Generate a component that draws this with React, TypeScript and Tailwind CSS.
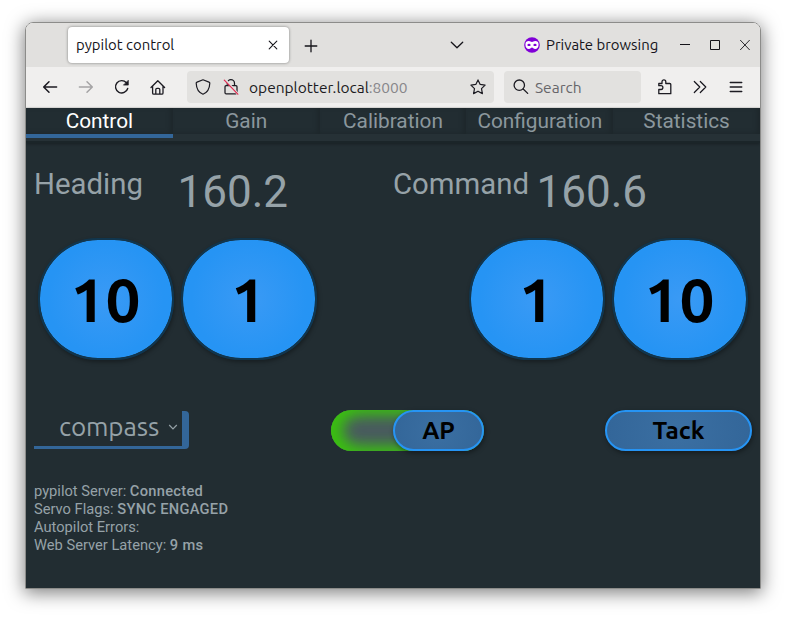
import type { ReactNode } from "react";

const ubuntu = "font-['Ubuntu','Noto_Sans',sans-serif]";

function Icon({ children, className = "" }: { children: ReactNode; className?: string }) {
  return (
    <svg
      viewBox="0 0 16 16"
      fill="none"
      stroke="currentColor"
      strokeWidth="1.3"
      strokeLinecap="round"
      strokeLinejoin="round"
      className={`block size-4 shrink-0 ${className}`}
    >
      {children}
    </svg>
  );
}

function TitleBar() {
  return (
    <div className="flex h-11 items-center bg-[#e1e0de] text-[#15141a]">
      <div className="-mt-px ml-[42px] flex h-9 w-[221px] shrink-0 items-center rounded bg-white pr-[8px] pl-[8px] shadow-[0_0_3px_rgba(0,0,0,0.45)]">
        <span className="pt-[2px] text-[14.9px] whitespace-nowrap">pypilot control</span>
        <Icon className="ml-auto">
          <path d="M4.2 4.2l7.6 7.6M11.8 4.2l-7.6 7.6" strokeWidth="1.1" />
        </Icon>
      </div>
      <Icon className="mt-px ml-[14px]">
        <path d="M8 2.2v11.6M2.2 8h11.6" />
      </Icon>
      <Icon className="ml-[130px]">
        <path d="M2.3 5.2L8 10.7l5.7-5.5" />
      </Icon>
      <svg viewBox="0 0 16 16" className="ml-[59px] block size-4 shrink-0">
        <circle cx="8" cy="8" r="7.8" fill="#8000d7" />
        <path
          d="M1.4 7.400c0-2.200 1.400-3.300 3.400-3.300 1.500 0 2.200.8 3.200.8s1.700-.8 3.200-.8c2 0 3.400 1.100 3.400 3.300 0 2.800-1.400 4.500-3.500 4.500-1.600 0-2.100-1.400-3.100-1.400s-1.500 1.400-3.100 1.400c-2.100 0-3.500-1.700-3.500-4.500z"
          fill="#fff"
        />
        <ellipse cx="5" cy="7.900" rx="1.600" ry="1.200" fill="#8000d7" />
        <ellipse cx="11" cy="7.900" rx="1.600" ry="1.200" fill="#8000d7" />
      </svg>
      <span className="ml-[6px] w-[113px] text-[14.9px] whitespace-nowrap">Private browsing</span>
      <svg viewBox="0 0 72 12" className="ml-[20px] block h-3 w-[72px] shrink-0" fill="none" stroke="currentColor">
        <path d="M1 5.5h10" />
        <path d="M31.5 1.500h9v9h-9z" />
        <path d="M61.200 1l9.500 10M70.700 1l-9.500 10" strokeWidth=".9" />
      </svg>
    </div>
  );
}

function ToolBar() {
  return (
    <div className="flex h-[41px] items-center border-b border-[#e0dfdd] bg-[#f0efee] text-[#1c1b22]">
      <Icon className="ml-4">
        <path d="M14.600 8H1.800M7 2.700L1.700 8 7 13.300" strokeWidth="1.500" />
      </Icon>
      <Icon className="ml-5 text-[#a5a4a5]">
        <path d="M1.400 8h12.800M9 2.700L14.300 8 9 13.300" strokeWidth="1.500" />
      </Icon>
      <Icon className="ml-5">
        <path d="M13.700 9.500A6.200 6.200 0 1 1 12.400 3.700" strokeWidth="1.400" />
        <path d="M14.300 1.600v4.500H9.800z" fill="currentColor" strokeWidth=".7" />
      </Icon>
      <Icon className="ml-5">
        <path d="M1 8.500L7.800 1.800 14.600 8.500M2.600 7.300v6.700c0 .7.400 1.200 1.200 1.200h8c.8 0 1.200-.5 1.200-1.200V7.300M5.800 15V10.500c0-.8.500-1.200 1.200-1.200h1.600c.7 0 1.200.4 1.200 1.200V15" />
      </Icon>
      <div className="ml-[21px] flex h-8 w-[307px] shrink-0 items-center rounded bg-[#e2e1df] px-2">
        <Icon>
          <path d="M8 .8l6 2.300c.7.200.8.6.8 1.100C14.600 9.400 12.300 13.500 8 15.200 3.700 13.500 1.400 9.400 1.200 4.200c0-.5.100-.9.800-1.100z" strokeWidth="1.200" />
        </Icon>
        <Icon className="ml-3">
          <path d="M4.300 6.500V4.300a3.600 3.600 0 0 1 7.200 0v2.200M3 6.700h10c.6 0 1 .4 1 1v6c0 .7-.5 1.200-1.200 1.200H3.200c-.7 0-1.200-.5-1.200-1.200v-6c0-.6.400-1 1-1z" strokeWidth="1.250" />
          <path d="M2.300.800l12.800 14.500" stroke="#e2e1df" strokeWidth="2.400" />
          <path d="M1.300 1.200l13.500 14" stroke="#e22850" strokeWidth="1.200" />
        </Icon>
        <span className="ml-[10px] pt-px text-[15.5px] whitespace-nowrap">
          openplotter.local<span className="text-[#87868a]">:8000</span>
        </span>
        <Icon className="ml-auto">
          <path d="M8 .9l2.200 4.500 4.900.7-3.600 3.500.9 5L8 12.200l-4.400 2.400.9-5L.9 6.100l4.900-.7z" strokeWidth="1.200" />
        </Icon>
      </div>
      <div className="ml-[10px] flex h-8 w-[137px] shrink-0 items-center rounded bg-[#e2e1df] pl-[9px]">
        <Icon>
          <circle cx="6.300" cy="6.200" r="5.200" />
          <path d="M10.200 10l4.500 4.400" />
        </Icon>
        <span className="ml-[6px] pt-px text-[15.5px] text-[#67666a]">Search</span>
      </div>
      <Icon className="ml-4">
        <path d="M1.800 14.700V10.500H4a1.900 1.900 0 0 0 0-3.800H1.800V4.500H5V2.700a1.900 1.900 0 0 1 3.800 0V4.500h4c.6 0 1 .4 1 1v9.200z" />
      </Icon>
      <Icon className="ml-[19px]">
        <path d="M2.300 2.500L7.800 8l-5.500 5.500M8.300 2.500L13.800 8l-5.500 5.500" strokeWidth="1.200" />
      </Icon>
      <Icon className="ml-5">
        <path d="M2.200 3.500h11.600M2.200 8h11.600M2.200 12.500h11.600" />
      </Icon>
    </div>
  );
}

const tabs = ["Control", "Gain", "Calibration", "Configuration", "Statistics"];

function Tabs() {
  return (
    <div className="border-b-2 border-[#1b2529] shadow-[0_1px_3px_rgba(0,0,0,0.3)]">
      <div className="grid h-[33px] grid-cols-5 bg-[#263136]">
        {tabs.map((tab, i) => (
          <div
            key={tab}
            className={`flex h-[30px] justify-center border-b-4 text-[20.8px] leading-[26px] ${
              i === 0 ? "border-[#336699] text-white" : "border-[#263136] text-[#8b979d]"
            }`}
          >
            <span className="flex h-[26px] w-full justify-center bg-[#222d32] shadow-[inset_-3px_-1px_5px_rgba(0,0,0,0.14)]">{tab}</span>
          </div>
        ))}
      </div>
    </div>
  );
}

function RoundButton({ children }: { children: ReactNode }) {
  return (
    <button
      className={`${ubuntu} flex h-[122px] w-[136px] items-center justify-center rounded-[60px] border-2 border-[#10364f] bg-[radial-gradient(circle,#3a9af5_0%,#2694f4_65%,#2494f4_100%)] bg-clip-padding pr-px text-[62px] leading-none font-bold text-black shadow-[1px_2px_4px_rgba(0,0,0,0.35)]`}
    >
      {children}
    </button>
  );
}

function Reading({ label, value }: { label: string; value: string }) {
  return (
    <div className="flex w-[359px] items-start">
      <span className="w-[143.500px] text-[29.360px] leading-[34px]">{label}</span>
      <span className="text-[44.040px] leading-[50px]">{value}</span>
    </div>
  );
}

function Status({ label, value = "" }: { label: string; value?: string }) {
  return (
    <p>
      {label}: <b className="font-medium tracking-[0.28px]">{value}</b>
    </p>
  );
}

function Pilot() {
  return (
    <main className="h-[480px] bg-[#222d32] font-['Roboto',sans-serif] text-[#96a2a8]">
      <Tabs />
      <div className="flex pt-[24px] pl-2">
        <Reading label="Heading" value="160.2" />
        <Reading label="Command" value="160.6" />
      </div>
      <div className="mt-[21px] flex gap-[7px] pl-3">
        <RoundButton>10</RoundButton>
        <RoundButton>1</RoundButton>
        <div className="ml-auto flex gap-[7px] pr-3">
          <RoundButton>1</RoundButton>
          <RoundButton>10</RoundButton>
        </div>
      </div>
      <div className="mt-[50px] flex h-[41px] items-start pr-2 pl-2">
        <div className={`${ubuntu} mt-px flex h-[38px] w-[155px] items-center rounded-r-[4px] border-r-[7px] border-b-[3px] border-[#336699] pl-[25px] text-[26px] leading-none`}>
          <span className="pb-[3px] tracking-[-0.1px]">compass</span>
          <svg viewBox="0 0 10 10" className="mr-[4px] mb-[4px] ml-auto block size-[10px]" fill="none" stroke="currentColor" strokeWidth="1.200">
            <path d="M1.200 3L5 6.800 8.800 3" />
          </svg>
        </div>
        <div className="ml-[142px] flex h-[41px] w-[153px] justify-end rounded-[21px] bg-[#4a5a60] shadow-[inset_10px_0_16px_0_#3ac010,inset_0_0_18px_2px_#3ac010]">
          <button className={`${ubuntu} flex h-[41px] w-[91px] items-center justify-center rounded-[21px] border-2 border-[#2694f4] bg-[radial-gradient(circle,#3b6fa2,#336699)] text-[24.5px] font-bold text-black shadow-[1px_2px_5px_rgba(0,0,0,0.4)]`}>
            AP
          </button>
        </div>
        <button className={`${ubuntu} ml-auto flex h-[41px] w-[147px] items-center justify-center rounded-[21px] border-2 border-[#2694f4] bg-[radial-gradient(circle,#3b6fa2,#336699)] text-[24.5px] font-bold text-black shadow-[1px_2px_5px_rgba(0,0,0,0.4)]`}>
          Tack
        </button>
      </div>
      <div className="mt-[31px] pl-2 text-[14.680px] leading-[18px]">
        <Status label="pypilot Server" value="Connected" />
        <Status label="Servo Flags" value="SYNC ENGAGED" />
        <Status label="Autopilot Errors" />
        <Status label="Web Server Latency" value="9 ms" />
      </div>
    </main>
  );
}

export default function App() {
  return (
    <div className="h-[617px] w-[786px] overflow-hidden bg-white pt-[22px] pl-[25px]">
      <div className={`${ubuntu} w-[736px] overflow-hidden rounded-t-[8px] border border-[#8c8c8a] shadow-[0_3px_18px_1px_rgba(0,0,0,0.5)]`}>
        <TitleBar />
        <ToolBar />
        <Pilot />
      </div>
    </div>
  );
}
